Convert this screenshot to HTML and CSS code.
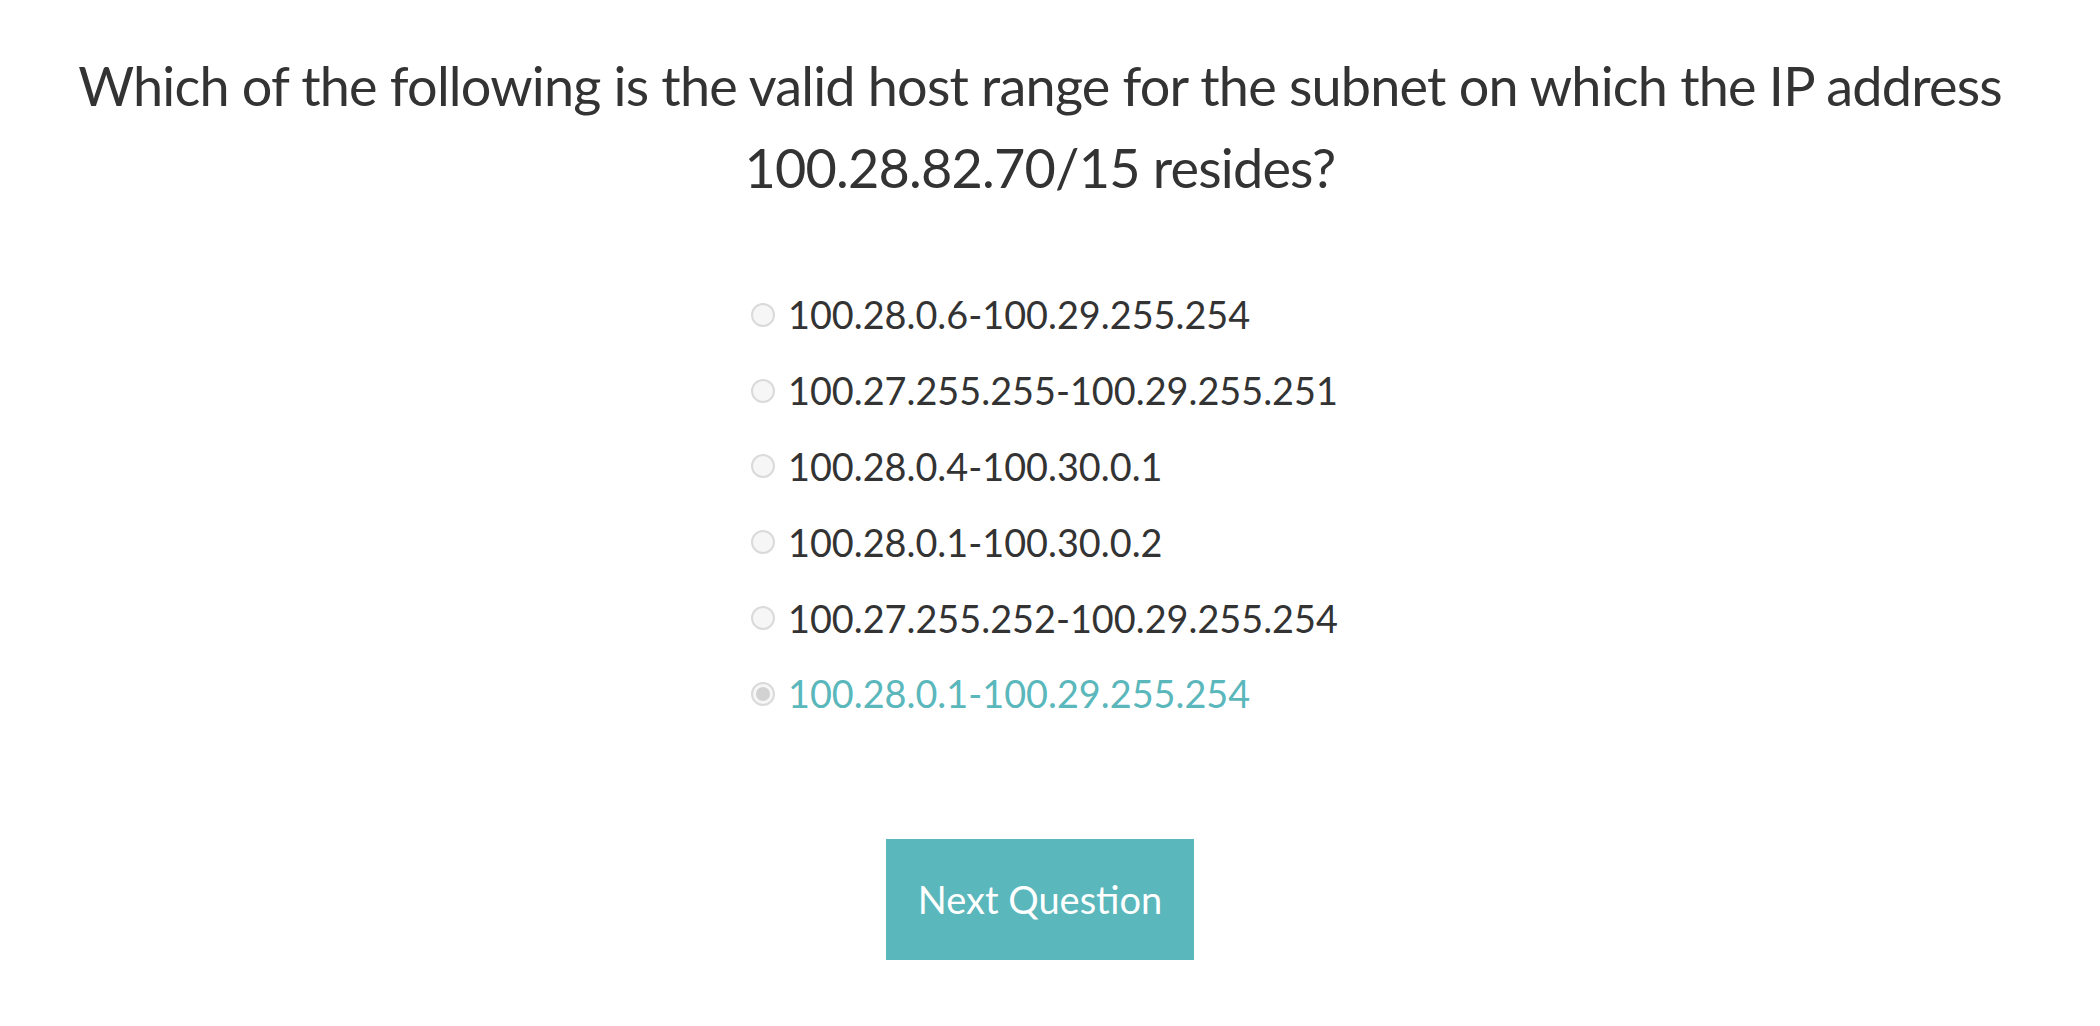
FILE: index.html
```html
<!DOCTYPE html>
<html lang="en">
<head>
<meta charset="utf-8">
<title>Quiz</title>
<link rel="stylesheet" href="styles.css">
</head>
<body>
<main class="quiz">
  <h1 class="question">Which of the following is the valid host range for the subnet on which the IP address 100.28.82.70/15 resides?</h1>
  <div class="options-wrap">
    <ul class="options">
      <li class="option"><span class="radio"></span><span class="label">100.28.0.6-100.29.255.254</span></li>
      <li class="option"><span class="radio"></span><span class="label">100.27.255.255-100.29.255.251</span></li>
      <li class="option"><span class="radio"></span><span class="label">100.28.0.4-100.30.0.1</span></li>
      <li class="option"><span class="radio"></span><span class="label">100.28.0.1-100.30.0.2</span></li>
      <li class="option"><span class="radio"></span><span class="label">100.27.255.252-100.29.255.254</span></li>
      <li class="option selected"><span class="radio checked"></span><span class="label">100.28.0.1-100.29.255.254</span></li>
    </ul>
  </div>
  <div class="actions">
    <button class="next-btn" type="button">Next Question</button>
  </div>
</main>
</body>
</html>
```
FILE: styles.css
```css
html, body {
  margin: 0;
  padding: 0;
  background: #ffffff;
}

body {
  font-family: "Lato", "Open Sans", sans-serif;
  color: #333333;
}

.quiz {
  width: 2080px;
  padding-top: 45px;
  display: flex;
  flex-direction: column;
  align-items: center;
}

.question {
  margin: 0;
  width: 1960px;
  font-size: 54px;
  font-weight: 400;
  line-height: 82px;
  text-align: center;
  color: #333333;
  letter-spacing: -0.8px;
}

.options-wrap {
  width: 582px;
  padding-left: 4px;
  margin-top: 68px;
}

.options {
  list-style: none;
  margin: 0;
  padding: 0;
  display: flex;
  flex-direction: column;
}

.option {
  display: flex;
  align-items: center;
  gap: 13px;
  height: 75.8px;
  font-size: 37.8px;
  color: #333333;
  white-space: nowrap;
}

.option.selected .label {
  color: #5ab7bb;
}

.radio {
  width: 24px;
  height: 24px;
  border: 2px solid #dadada;
  border-radius: 50%;
  background: #f6f6f6;
  box-sizing: border-box;
  flex: none;
  display: flex;
  align-items: center;
  justify-content: center;
}

.radio.checked::after {
  content: "";
  width: 14px;
  height: 14px;
  border-radius: 50%;
  background: #d2d2d2;
}

.actions {
  margin-top: 107px;
  display: flex;
  justify-content: center;
}

.next-btn {
  width: 308px;
  height: 121px;
  border: none;
  background: #5ab7bb;
  color: #ffffff;
  font-family: "Lato", "Open Sans", sans-serif;
  font-size: 38px;
  font-weight: 400;
  padding: 0;
  cursor: pointer;
}
```
